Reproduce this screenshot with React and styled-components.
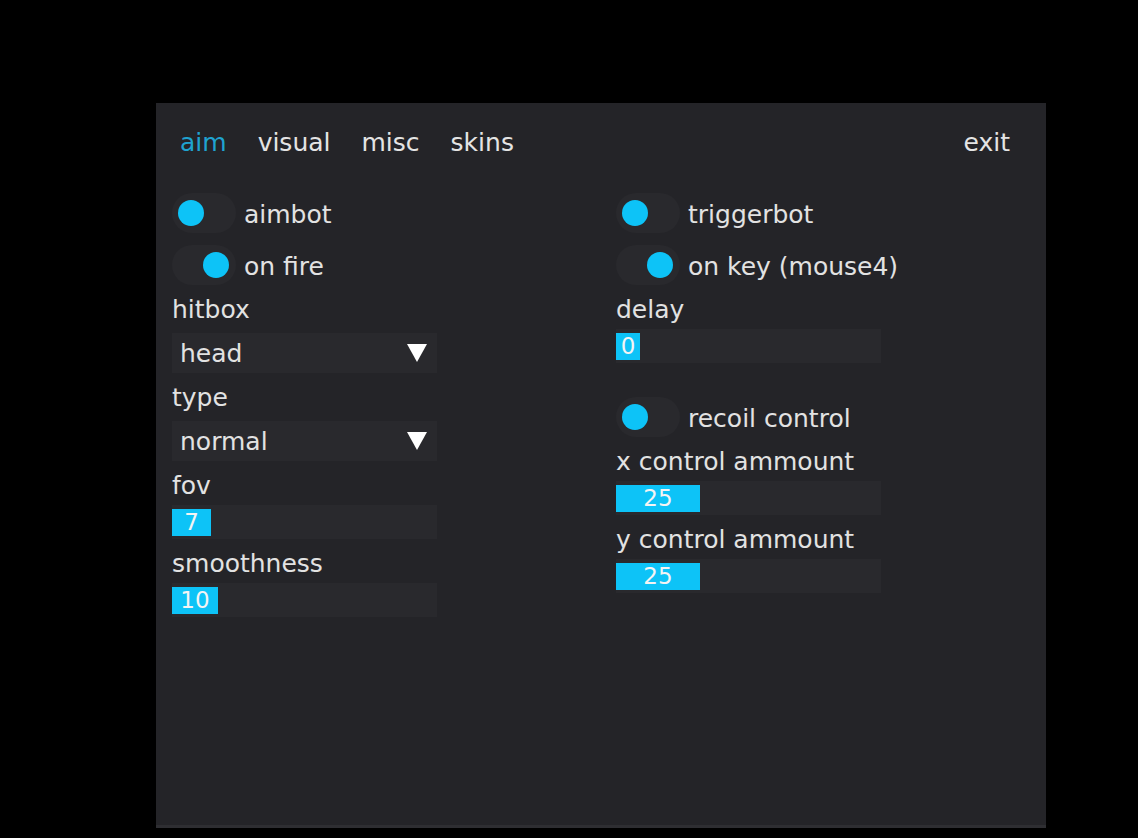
import React from 'react';
import styled, { createGlobalStyle } from 'styled-components';

const tabs = ['aim', 'visual', 'misc', 'skins'];

const App = () => {
    return (
        <>
            <GlobalStyle />
            <Panel>
                <TabBar>
                    <Tabs>
                        {tabs.map((t, i) => (
                            <Tab key={t} active={i === 0}>{t}</Tab>
                        ))}
                    </Tabs>
                    <Tab>exit</Tab>
                </TabBar>
                <Columns>
                    <Column>
                        <Toggle label="aimbot" />
                        <Toggle label="on fire" on />
                        <Field>
                            <Label>hitbox</Label>
                            <Select value="head" />
                        </Field>
                        <Field>
                            <Label>type</Label>
                            <Select value="normal" />
                        </Field>
                        <Field>
                            <Label>fov</Label>
                            <Slider value="7" fill={39} />
                        </Field>
                        <Field>
                            <Label>smoothness</Label>
                            <Slider value="10" fill={46} />
                        </Field>
                    </Column>
                    <Column>
                        <Toggle label="triggerbot" />
                        <Toggle label="on key (mouse4)" on />
                        <Field>
                            <Label>delay</Label>
                            <Slider value="0" fill={24} />
                        </Field>
                        <Spacer />
                        <Toggle label="recoil control" />
                        <Field>
                            <Label>x control ammount</Label>
                            <Slider value="25" fill={84} />
                        </Field>
                        <Field>
                            <Label>y control ammount</Label>
                            <Slider value="25" fill={84} />
                        </Field>
                    </Column>
                </Columns>
            </Panel>
        </>
    )
}

const Toggle = ({ label, on }) => (
    <ToggleRow>
        <Track on={on}>
            <Knob />
        </Track>
        <ToggleText>{label}</ToggleText>
    </ToggleRow>
)

const Select = ({ value }) => (
    <SelectBox>
        <span>{value}</span>
        <svg width="20" height="18" viewBox="0 0 20 18">
            <polygon points="0,0 20,0 10,18" fill="#ffffff" />
        </svg>
    </SelectBox>
)

const Slider = ({ value, fill }) => (
    <SliderTrack>
        <SliderFill style={{ width: fill }}>{value}</SliderFill>
    </SliderTrack>
)

const GlobalStyle = createGlobalStyle`
    html, body {
        margin: 0;
        background: #000;
    }
    body {
        font-family: "DejaVu Sans", Verdana, sans-serif;
        color: #e2e2e2;
    }
`
const Panel = styled.section`
    margin: 103px 0 0 156px;
    width: 890px;
    height: 725px;
    box-sizing: border-box;
    background: #242428;
    border-bottom: 3px solid #2e2e32;
    padding: 25px 16px 0 16px;
`
const TabBar = styled.nav`
    display: flex;
    justify-content: space-between;
    align-items: center;
    height: 30px;
    padding-right: 12px;
`
const Tabs = styled.div`
    display: flex;
`
const Tab = styled.span`
    font-size: 25px;
    line-height: 30px;
    padding: 0 8px;
    margin-right: 15px;
    color: ${p => p.active ? '#1fa3d0' : '#e4e4e4'};
    &:last-child {
        margin-right: 0;
    }
`
const Columns = styled.div`
    display: grid;
    grid-template-columns: 444px 1fr;
    margin-top: 35px;
`
const Column = styled.div`
    display: flex;
    flex-direction: column;
    gap: 10px;
`
const Spacer = styled.div`
    height: 14px;
`
const ToggleRow = styled.div`
    display: flex;
    align-items: center;
    gap: 8px;
    height: 40px;
    & + & {
        margin-top: 2px;
    }
`
const Track = styled.div`
    display: flex;
    align-items: center;
    justify-content: ${p => p.on ? 'flex-end' : 'flex-start'};
    box-sizing: border-box;
    width: 64px;
    height: 40px;
    padding: 0 7px 0 6px;
    border-radius: 20px;
    background: #29292d;
`
const Knob = styled.div`
    width: 26px;
    height: 26px;
    border-radius: 50%;
    background: #0dc3f7;
`
const ToggleText = styled.span`
    font-size: 25px;
    line-height: 30px;
    padding-top: 3px;
`
const Field = styled.div`
    display: flex;
    flex-direction: column;
`
const Label = styled.div`
    font-size: 25px;
    line-height: 30px;
`
const SelectBox = styled.div`
    display: flex;
    align-items: center;
    justify-content: space-between;
    box-sizing: border-box;
    width: 265px;
    height: 40px;
    margin-top: 8px;
    padding: 0 10px 0 8px;
    background: #29292d;
    font-size: 25px;
`
const SliderTrack = styled.div`
    display: flex;
    align-items: center;
    width: 265px;
    height: 34px;
    margin-top: 4px;
    background: #29292d;
`
const SliderFill = styled.div`
    height: 27px;
    background: #0dc3f7;
    color: #f4f4f4;
    font-size: 23px;
    line-height: 27px;
    text-align: center;
`

export default App;
